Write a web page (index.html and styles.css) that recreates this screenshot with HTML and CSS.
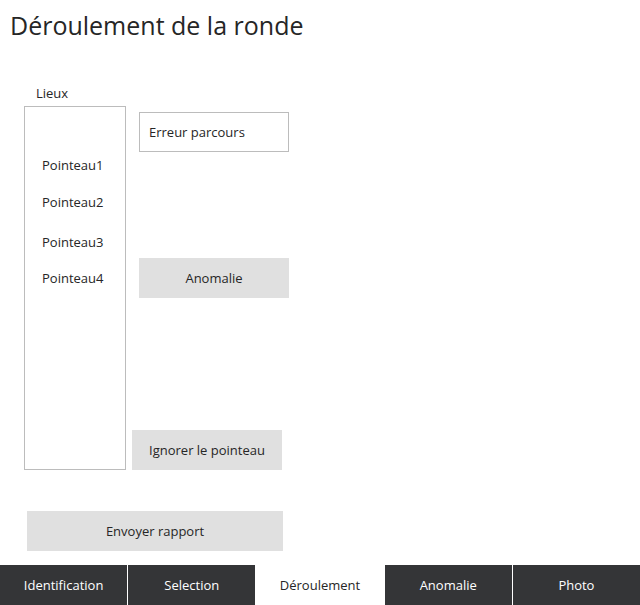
FILE: index.html
```html
<!DOCTYPE html>
<html lang="fr">
<head>
<meta charset="utf-8">
<title>Déroulement de la ronde</title>
<link rel="stylesheet" href="styles.css">
</head>
<body>
<div class="page">
  <h1 class="title">Déroulement de la ronde</h1>
  <div class="content">
    <div class="places">
      <div class="places-label">Lieux</div>
      <ul class="places-list">
        <li class="place">Pointeau1</li>
        <li class="place">Pointeau2</li>
        <li class="place">Pointeau3</li>
        <li class="place">Pointeau4</li>
      </ul>
    </div>
    <div class="actions">
      <div class="status-box">Erreur parcours</div>
      <button class="btn btn-anomaly">Anomalie</button>
      <button class="btn btn-ignore">Ignorer le pointeau</button>
    </div>
  </div>
  <button class="btn btn-send">Envoyer rapport</button>
  <nav class="tabs">
    <a class="tab">Identification</a>
    <a class="tab">Selection</a>
    <a class="tab tab-active">Déroulement</a>
    <a class="tab">Anomalie</a>
    <a class="tab">Photo</a>
  </nav>
</div>
</body>
</html>
```
FILE: styles.css
```css
html, body {
  margin: 0;
  padding: 0;
  background: #ffffff;
}
body {
  font-family: "Open Sans", "Noto Sans", "DejaVu Sans", sans-serif;
  color: #262626;
  font-size: 13px;
}
.page {
  display: flex;
  flex-direction: column;
  height: 605px;
}
.title {
  margin: 8px 0 0 10px;
  font-size: 25px;
  font-weight: 400;
  line-height: 34px;
  color: #262626;
}
.content {
  display: flex;
  margin-top: 42px;
}
.places {
  margin-left: 24px;
  display: flex;
  flex-direction: column;
}
.places-label {
  margin-left: 12px;
  margin-top: -1px;
  line-height: 20px;
  height: 20px;
}
.places-list {
  list-style: none;
  margin: 3px 0 0 0;
  padding: 48px 0 0 17px;
  width: 83px;
  height: 314px;
  border: 1px solid #bcbcbc;
}
.place {
  line-height: 20px;
  height: 20px;
}
.place:nth-child(2) { margin-top: 17px; }
.place:nth-child(3) { margin-top: 20px; }
.place:nth-child(4) { margin-top: 16px; }
.actions {
  display: flex;
  flex-direction: column;
  align-items: flex-start;
  margin-left: 13px;
  padding-top: 28px;
}
.status-box {
  box-sizing: border-box;
  width: 150px;
  height: 40px;
  border: 1px solid #bcbcbc;
  padding-left: 9px;
  line-height: 38px;
}
.btn {
  box-sizing: border-box;
  width: 150px;
  height: 40px;
  border: none;
  background: #e0e0e0;
  font-family: inherit;
  font-size: 13px;
  color: #262626;
  padding: 0;
}
.btn-anomaly {
  margin-top: 106px;
}
.btn-ignore {
  margin-top: 132px;
  margin-left: -7px;
}
.btn-send {
  width: 256px;
  margin: 41px 0 0 27px;
}
.tabs {
  margin-top: auto;
  display: flex;
  gap: 1px;
  height: 40px;
  background: #ffffff;
}
.tab {
  flex: 1;
  background: #343537;
  color: #ffffff;
  display: flex;
  align-items: center;
  justify-content: center;
}
.tab-active {
  background: #ffffff;
  color: #262626;
}
```
